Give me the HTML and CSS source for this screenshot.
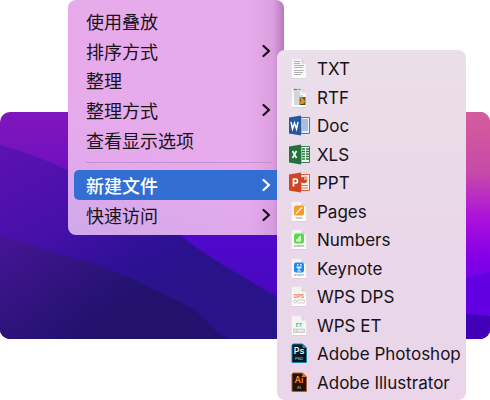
FILE: index.html
```html
<!DOCTYPE html>
<html lang="zh-CN">
<head>
<meta charset="utf-8">
<meta name="viewport" content="width=device-width, initial-scale=1">
<title>新建文件</title>
<link rel="stylesheet" href="styles.css">
</head>
<body>
<svg class="defs" aria-hidden="true">
  <defs>
    <linearGradient id="paper" x1="0" y1="0" x2="0" y2="1"><stop offset="0" stop-color="#f3f1f2"/><stop offset="1" stop-color="#fdfdfd"/></linearGradient>
    <symbol id="page" viewBox="0 0 24 22">
      <path d="M4 1h9.500l5 5v14H4z" fill="none" stroke="#bbaebb" stroke-opacity=".5"/>
      <path d="M3.500.5h10l5 5V20h-15z" fill="url(#paper)"/>
      <path d="M13.500.5v5h5z" fill="#d9d5d9"/>
    </symbol>
    <symbol id="chevron" viewBox="0 0 10 14"><path d="M2.500 2L8 7l-5.500 5" fill="none" stroke="currentColor" stroke-width="2.300" stroke-linecap="round" stroke-linejoin="round"/></symbol>
  </defs>
</svg>
<main class="desktop">
  <svg class="wallpaper" viewBox="0 0 490 227" preserveAspectRatio="none" aria-hidden="true">
    <defs>
      <linearGradient id="sky" x1="0" y1="0" x2="0" y2="1"><stop offset="0" stop-color="#8016bc"/><stop offset=".3" stop-color="#6c10c0"/><stop offset=".5" stop-color="#4f09cc"/><stop offset="1" stop-color="#4607b8"/></linearGradient>
      <linearGradient id="ridge" gradientUnits="userSpaceOnUse" x1="20" y1="30" x2="110" y2="200"><stop offset="0" stop-color="#5b10b4"/><stop offset=".5" stop-color="#4510a8"/><stop offset=".8" stop-color="#2f1096"/><stop offset="1" stop-color="#29138a"/></linearGradient>
      <linearGradient id="front" gradientUnits="userSpaceOnUse" x1="0" y1="130" x2="70" y2="227"><stop offset="0" stop-color="#451494"/><stop offset="1" stop-color="#22126e"/></linearGradient>
      <linearGradient id="glow" x1="0" y1="0" x2="0" y2="1"><stop offset="0" stop-color="#d55c9c"/><stop offset=".27" stop-color="#c64aa8"/><stop offset=".47" stop-color="#ac10dc"/><stop offset=".65" stop-color="#8000e8"/><stop offset="1" stop-color="#6800e0"/></linearGradient>
    </defs>
    <rect width="490" height="227" fill="url(#sky)"/>
    <rect x="340" width="150" height="227" fill="url(#glow)"/>
    <path d="M340 200Q430 174 490 160v67H340z" fill="#6200e2"/>
    <path d="M340 195q70 2 150 9v23H340z" fill="#4200b8"/>
    <path d="M0 33Q30 41 68 58q62 28 112 65c36 28 50 33 97 62l65 42H0z" fill="url(#ridge)"/>
    <path d="M0 124c25 5 46 14 70 21 30 8 50 15 80 31 20 9 30 13 43 21 15 10 19 23 37 30H0z" fill="url(#front)"/>
  </svg>

  <nav class="menu" aria-label="桌面菜单">
    <ul class="group views">
      <li><button class="item" type="button">使用叠放</button></li>
      <li><button class="item" type="button">排序方式<svg class="arrow"><use href="#chevron"/></svg></button></li>
      <li><button class="item" type="button">整理</button></li>
      <li><button class="item" type="button">整理方式<svg class="arrow"><use href="#chevron"/></svg></button></li>
      <li><button class="item" type="button">查看显示选项</button></li>
    </ul>
    <hr class="separator">
    <ul class="group">
      <li><button class="item active" type="button" aria-haspopup="menu" aria-expanded="true">新建文件<svg class="arrow"><use href="#chevron"/></svg></button></li>
      <li><button class="item" type="button">快速访问<svg class="arrow"><use href="#chevron"/></svg></button></li>
    </ul>
  </nav>

  <nav class="submenu" aria-label="新建文件">
    <button class="file" type="button"><svg class="icon" viewBox="0 0 24 22"><use href="#page"/><path d="M6 3.500h6M6 5.500h6M6 7.500h10M6 9.500h9M6 12.500h10M6 14.500h9M6 16.500h7" stroke="#b4b1b4"/></svg>TXT</button>
    <button class="file" type="button"><svg class="icon" viewBox="0 0 24 22"><use href="#page"/><path d="M5.500 2.500h4M10.500 2.500h2" stroke="#777" stroke-width="1.500"/><path d="M6 5h6M6 7h6M6 9h9M6 11h5M6 13h5M6 15h5M6 17h5" stroke="#b4b4b4" stroke-width="1.200"/><path d="M11.500 10h6v8h-6z" fill="#55502b"/><path d="M13 12h3l1 3-2 2h-3z" fill="#ee8c20"/><path d="M12 10h3v2h-3z" fill="#8b9b50"/></svg>RTF</button>
    <button class="file" type="button"><svg class="icon" viewBox="0 0 24 22"><path d="M13 2.500h8.500v16H13z" fill="#e8f0fc" stroke="#5475b5"/><path d="M14 5h6M14 7h6M14 9h6M14 11h6M14 13h6M14 15h6" stroke="#6a8ac4"/><path d="M1 2.500L13 .5v20l-12-2z" fill="#29579f"/><path d="M3 7l1.500 7L6.500 8l2 6L10 7" fill="none" stroke="#fff" stroke-width="1.500"/></svg>Doc</button>
    <button class="file" type="button"><svg class="icon" viewBox="0 0 24 22"><path d="M13 2.500h8.500v16H13z" fill="#f6fff8" stroke="#39784b"/><path d="M14 5h3M18 5h3M14 7.500h3M18 7.500h3M14 10h3M18 10h3M14 12.500h3M18 12.500h3M14 15h3M18 15h3" stroke="#28733e" stroke-width="1.300"/><path d="M1 2.500L13 .5v20l-12-2z" fill="#24713d"/><path d="M4.500 7l4 7M8.500 7l-4 7" stroke="#fff" stroke-width="1.600"/></svg>XLS</button>
    <button class="file" type="button"><svg class="icon" viewBox="0 0 24 22"><path d="M13 2.500h8.500v16H13z" fill="#fff2ed" stroke="#d46044"/><circle cx="16" cy="8" r="3.200" fill="#ce4626"/><path d="M16 8V4.500h3.500V8z" fill="#ef9a84"/><path d="M13 13.500h7M13 16h7" stroke="#dc745b"/><path d="M1 2.500L13 .5v20l-12-2z" fill="#cd4525"/><path d="M5.500 14.500V7h2a2 2 0 010 4h-2" fill="none" stroke="#fff" stroke-width="1.700"/></svg>PPT</button>
    <button class="file" type="button"><svg class="icon" viewBox="0 0 24 22"><use href="#page"/><rect x="6" y="4.500" width="10" height="10" rx="2" fill="#f79b26"/><path d="M8 12.500l6-6" stroke="#fff3df" stroke-width="1.400"/><text class="tag" x="11" y="18">PAGES</text></svg>Pages</button>
    <button class="file" type="button"><svg class="icon" viewBox="0 0 24 22"><use href="#page"/><rect x="6" y="4.500" width="10" height="10" rx="2" fill="#55dd48"/><path d="M8 12.500v-2l2-1 1-2 2-1v6z" fill="#e7ffe1"/><text class="tag" x="11" y="18">NUMBERS</text></svg>Numbers</button>
    <button class="file" type="button"><svg class="icon" viewBox="0 0 24 22"><use href="#page"/><rect x="6" y="4.500" width="10" height="10" rx="2" fill="#2187f5"/><path d="M8 8.500h6l-1 2h-1.500v2H13v1H9v-1h1.500v-2H9zM9 6h1.500v1.500H9zM12 6h1.500v1.500H12z" fill="#d9f3ff"/><text class="tag" x="11" y="18">KEYNOTE</text></svg>Keynote</button>
    <button class="file" type="button"><svg class="icon" viewBox="0 0 24 22"><use href="#page"/><text class="label dps" x="11" y="11.500">DPS</text><rect x="5.500" y="14" width="3" height="3" rx="1.500" fill="none" stroke="#c7c4c7" stroke-width=".8"/><rect x="9.500" y="14" width="7" height="3" rx="1" fill="none" stroke="#c7c4c7" stroke-width=".8"/></svg>WPS DPS</button>
    <button class="file" type="button"><svg class="icon" viewBox="0 0 24 22"><use href="#page"/><text class="label et" x="11" y="11.500">ET</text><path d="M5.500 14h11v3.500h-11zM8.500 14v3.500" fill="#e6e3e6" stroke="#c7c4c7" stroke-width=".8"/></svg>WPS ET</button>
    <button class="file" type="button"><svg class="icon" viewBox="0 0 24 22"><path d="M5 1h9.500L18.500 5v14.500H4V2z" fill="#061722" stroke="#1682a8"/><path d="M14.500 1v4h4z" fill="#1593be"/><text class="adobe" x="11" y="11">Ps</text><text class="sub" x="11" y="17">PSD</text></svg>Adobe Photoshop</button>
    <button class="file" type="button"><svg class="icon" viewBox="0 0 24 22"><path d="M5 1h9.500L18.500 5v14.500H4V2z" fill="#24130a" stroke="#b55f20"/><path d="M14.500 1v4h4z" fill="#e87722"/><text class="adobe ai" x="11" y="11">Ai</text><text class="sub" x="11" y="17">AI</text></svg>Adobe Illustrator</button>
  </nav>
</main>
</body>
</html>
```

FILE: styles.css
```css
* { box-sizing: border-box; }
body {
  margin: 0;
  background: #fff;
  color: #171218;
  font-family: Inter, "Noto Sans CJK SC", sans-serif;
}
button {
  border: 0;
  background: none;
  color: inherit;
  font: inherit;
  text-align: left;
}
.defs { position: absolute; width: 0; height: 0; }
.desktop { position: relative; min-height: 400px; padding-top: 112px; }
.wallpaper { display: block; width: 100%; height: 227px; border-radius: 10px; }

.menu {
  position: absolute;
  top: 0;
  left: 68px;
  width: 216px;
  padding: 7px 0 5px 6px;
  border-radius: 8px;
  background:
    linear-gradient(90deg, transparent 84%, rgba(110, 50, 120, .1) 95%, rgba(90, 30, 100, .35)),
    linear-gradient(20deg, #cfa9ea, #e3a9ec 28%, #e7abec 45%);
  font-family: "Noto Sans CJK SC", sans-serif;
  font-size: 18px;
  line-height: 28px;
}
.group { display: grid; margin: 0; padding: 0; list-style: none; grid-auto-rows: 30px; }
.group.views { height: 148px; grid-auto-rows: 1fr; }
.item {
  display: flex;
  align-items: center;
  justify-content: space-between;
  width: 100%;
  height: 100%;
  padding: 0 13px 1px 12px;
  border-radius: 5px;
}
.item.active { background: #336fd3; color: #fff; font-weight: 500; }
.arrow { width: 10px; height: 14px; }
.separator { height: 1px; margin: 7px 12px; border: 0; background: #c68fcd; }

.submenu {
  position: absolute;
  top: 50px;
  right: 24px;
  display: grid;
  grid-auto-rows: 1fr;
  width: 189px;
  height: 350px;
  padding: 5px 0 3px;
  border-radius: 8px;
  background: linear-gradient(#eadfea, #ead8e9 50%, #ead5e9);
}
.file {
  display: flex;
  align-items: center;
  gap: 5px;
  padding: 0 0 0 11px;
  font-size: 17px;
  line-height: 28px;
  white-space: nowrap;
}
.icon { flex: none; width: 24px; height: 22px; }
.icon text { font-family: Inter, sans-serif; text-anchor: middle; }
.tag { fill: #888; font-size: 2px; font-weight: 600; }
.label { font-size: 5px; font-weight: 700; }
.dps { fill: #f17b50; }
.et { fill: #58c458; }
.adobe { fill: #e2f6ff; font-size: 9px; font-weight: 600; }
.adobe.ai { fill: #f5892f; }
.sub { fill: #d8d8dc; font-size: 4px; }
```
